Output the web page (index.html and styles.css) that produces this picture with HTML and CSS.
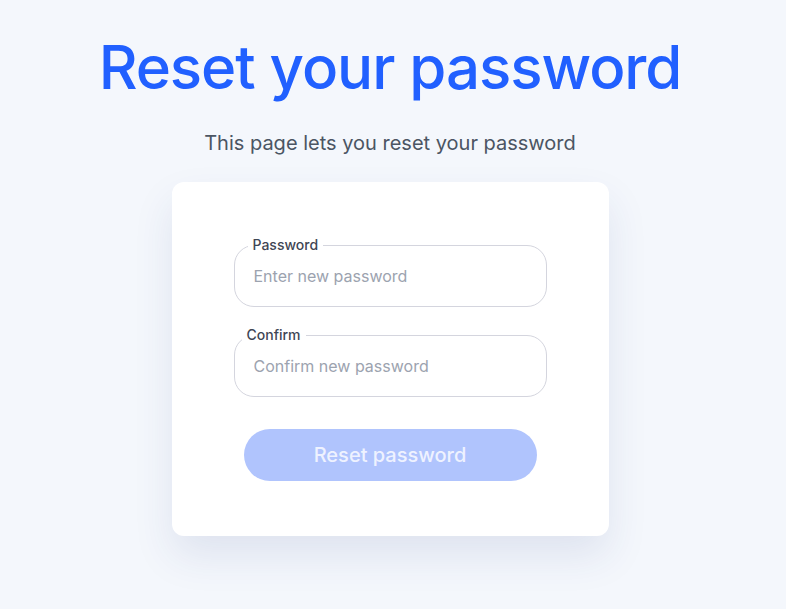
FILE: index.html
```html
<!DOCTYPE html>
<html lang="en">
<head>
<meta charset="UTF-8" />
<meta name="viewport" content="width=device-width, initial-scale=1" />
<title>Reset your password</title>
<link rel="stylesheet" href="styles.css">
</head>
<body>
<div class="page">
  <h1>Reset your password</h1>
  <p class="subtitle">This page lets you reset your password</p>

  <form class="card">
    <fieldset class="field field-password">
      <legend>Password</legend>
      <input type="password" placeholder="Enter new password" />
    </fieldset>

    <fieldset class="field field-confirm">
      <legend>Confirm</legend>
      <input type="password" placeholder="Confirm new password" />
    </fieldset>

    <button type="submit" disabled>Reset password</button>
  </form>
</div>
</body>
</html>
```

FILE: styles.css
```css
body {
  margin: 0;
  background: #f4f7fc;
  font-family: Inter, "Noto Sans", sans-serif;
}
.page {
  display: flex;
  flex-direction: column;
  align-items: center;
  padding: 31px 6px 60px 0;
}
h1 {
  margin: 0;
  font-size: 60px;
  line-height: 72px;
  font-weight: 500;
  letter-spacing: -1.05px;
  color: #2160ff;
}
.subtitle {
  margin: 28px 0 0;
  font-size: 20px;
  line-height: 24px;
  color: #4b5563;
}
.card {
  margin-top: 27px;
  width: 437px;
  box-sizing: border-box;
  padding: 56px 62px 55px;
  background: white;
  border-radius: 12px;
  box-shadow: 0 20px 40px rgba(40, 60, 130, 0.1);
  display: flex;
  flex-direction: column;
  align-items: center;
}
.field {
  width: 100%;
  box-sizing: border-box;
  margin: 0;
  padding: 0 0 10px;
  border: 1px solid #d4d5de;
  border-radius: 20px;
}
.field + .field {
  margin-top: 21px;
}
.field legend {
  padding: 0 5px;
  font-size: 14px;
  line-height: 14px;
  font-weight: 500;
  color: #3f4654;
}
.field-password legend {
  margin-left: 13px;
}
.field-confirm legend {
  margin-left: 7px;
}
.field input {
  width: 100%;
  box-sizing: border-box;
  border: none;
  outline: none;
  background: transparent;
  padding: 14px 19px 10px;
  font-family: inherit;
  font-size: 16px;
  line-height: 20px;
  color: #111827;
}
.field input::placeholder {
  color: #9ca3af;
}
button {
  margin-top: 32px;
  width: 293px;
  height: 52px;
  border: none;
  border-radius: 26px;
  background: #b0c4fd;
  color: #eef2ff;
  font-family: inherit;
  font-size: 20px;
  font-weight: 500;
}
```
